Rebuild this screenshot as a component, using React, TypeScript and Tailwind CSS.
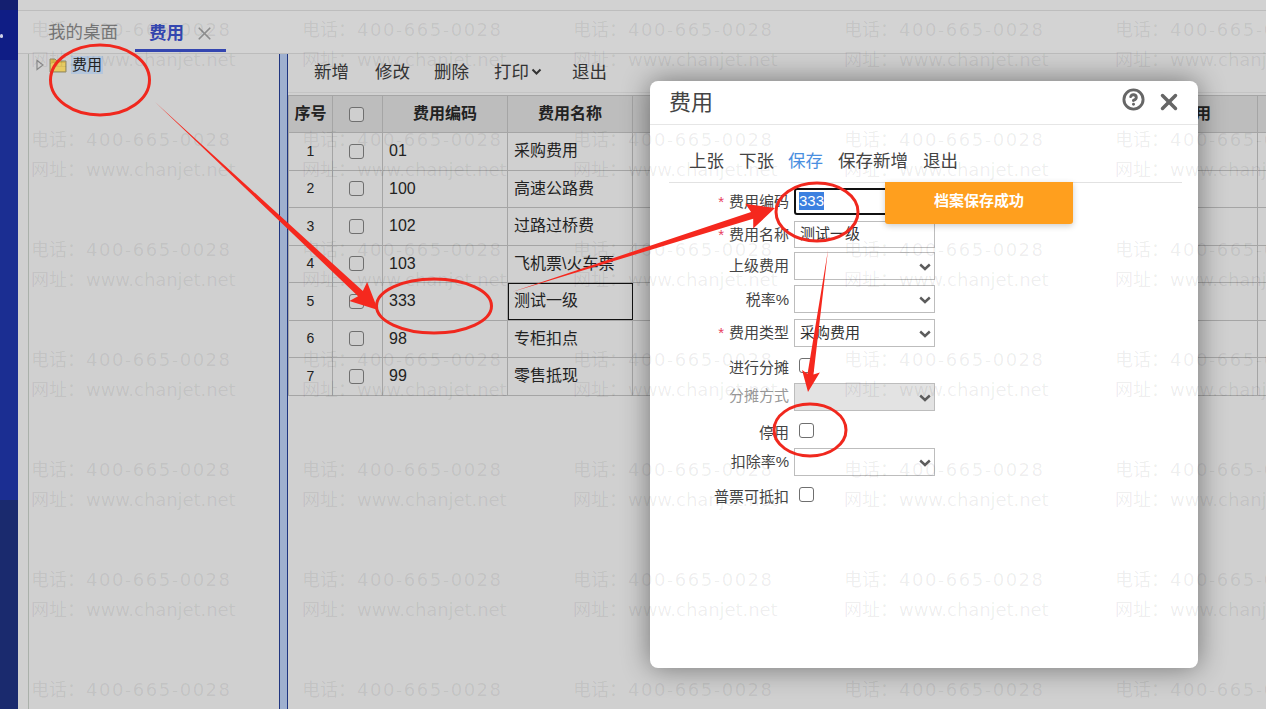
import React from "react";
import { CircleHelp, X } from "lucide-react";

const FONT = '"Liberation Sans","Noto Sans CJK SC",sans-serif';

const rows = [
  ["1", "01", "采购费用"],
  ["2", "100", "高速公路费"],
  ["3", "102", "过路过桥费"],
  ["4", "103", "飞机票\\火车票"],
  ["5", "333", "测试一级"],
  ["6", "98", "专柜扣点"],
  ["7", "99", "零售抵现"],
];

function Check({ dim }: { dim?: boolean }) {
  return (
    <input
      type="checkbox"
      readOnly
      className={
        "block appearance-none w-[15px] h-[15px] rounded-[3px] border border-[#6f6f6f] " +
        (dim ? "bg-[#cfcfcf]" : "bg-white")
      }
    />
  );
}

function Arrow({ x1, y1, x2, y2, w = 7, head = 13, len = 24 }: { x1: number; y1: number; x2: number; y2: number; w?: number; head?: number; len?: number }) {
  const dx = x2 - x1;
  const dy = y2 - y1;
  const d = Math.hypot(dx, dy);
  const ux = dx / d;
  const uy = dy / d;
  const nx = -uy;
  const ny = ux;
  const bx = x2 - ux * len;
  const by = y2 - uy * len;
  const pts = [
    [x1, y1],
    [bx + (nx * w) / 2, by + (ny * w) / 2],
    [bx + nx * head - ux * 3, by + ny * head - uy * 3],
    [x2, y2],
    [bx - nx * head - ux * 3, by - ny * head - uy * 3],
    [bx - (nx * w) / 2, by - (ny * w) / 2],
  ]
    .map((p) => p.join(","))
    .join(" ");
  return <polygon points={pts} fill="#f5281e" />;
}

function Row({ label, star, mt, grey, lab = "", children }: { label: string; star?: boolean; mt: string; grey?: boolean; lab?: string; children: React.ReactNode }) {
  return (
    <div className={"flex items-center h-[30px] " + mt}>
      <div className={"w-[139px] text-right text-[15px] leading-none " + lab + " " + (grey ? "text-[#999]" : "text-[#444]")}>
        {star && <span className="text-[#e8405f] mr-[5px]">*</span>}
        {label}
      </div>
      <div className="ml-[5px] flex items-center">{children}</div>
    </div>
  );
}

function Box({ children }: { children: React.ReactNode }) {
  return <div className="ml-[5px] -mt-[2px]">{children}</div>;
}

function Sel({ value, disabled }: { value?: string; disabled?: boolean }) {
  return (
    <div className="relative w-[141px] h-[28px]">
      <select
        disabled={disabled}
        defaultValue={value ?? ""}
        className={
          "block appearance-none w-full h-full border border-[#bdbdbd] text-[15px] pl-[5px] text-[#333] " +
          (disabled ? "bg-[#e3e3e3]" : "bg-white")
        }
        style={{ fontFamily: FONT }}
      >
        <option value="">{""}</option>
        {value && <option value={value}>{value}</option>}
      </select>
      <svg width="12" height="8" viewBox="0 0 12 8" className="absolute right-[4px] top-[11px] pointer-events-none">
        <path d="M1.2 1.5 L6 6 L10.8 1.5" fill="none" stroke="#5c5c5c" strokeWidth="2.4" />
      </svg>
    </div>
  );
}

export default function App() {
  const marks = Array.from({ length: 35 }, (_, i) => i);
  return (
    <div className="relative flex w-[1266px] h-[709px] overflow-hidden bg-[#d0d0d0] text-[#333]" style={{ fontFamily: FONT }}>
      {/* left rail */}
      <div className="w-[18px] flex flex-col shrink-0">
        <div className="h-[10px] bg-[#141f70]" />
        <div className="h-[50px] bg-[#0f1d85] relative">
          <div className="absolute left-0 top-[24px] w-[3px] h-[4px] rounded-full bg-white/80" />
        </div>
        <div className="h-[440px] bg-[#1b2e92]" />
        <div className="flex-1 bg-[#1a2a6e]" />
      </div>

      {/* main */}
      <div className="flex-1 flex flex-col min-w-0">
        <div className="h-[11px] border-b border-[#bdbdbd] bg-[#d2d2d2]" />
        <div className="h-[43px] border-b border-[#bcbcbc] bg-[#d3d3d3] flex items-end pl-[30px]">
          <div className="h-full flex items-center text-[17.5px] text-[#777] w-[87px]">我的桌面</div>
          <div className="flex items-center w-[91px] h-[37px] border-b-[3px] border-[#3446b0] pl-[14px] pt-[2px] mb-[1px]">
            <span className="text-[17.5px] font-bold text-[#3446b0]">费用</span>
            <X size={21} className="ml-[10px] text-[#8d8d8d]" strokeWidth={2} />
          </div>
        </div>

        <div className="flex-1 flex min-h-0">
          {/* tree */}
          <div className="ml-[10px] w-[252px] shrink-0 border-l border-[#aab0aa] border-r border-r-[#1f3580] pl-[6px] pt-[2px]">
            <div className="flex items-center h-[18px]">
              <svg width="10" height="12" viewBox="0 0 10 12" className="mr-[4px]">
                <path d="M2 1.5 L8 6 L2 10.5 Z" fill="none" stroke="#8a8a8a" strokeWidth="1.2" />
              </svg>
              <svg width="18" height="16" viewBox="0 0 18 16" className="mr-[4px]">
                <path d="M1 2h5l2 2h9v11H1z" fill="#d9b64a" stroke="#8f8a6a" />
                <path d="M2 6h14v8H2z" fill="#e8cb62" />
              </svg>
              <span className="bg-[#b4c6dc] text-[15px] leading-[18px] text-[#222] px-[1px]">费用</span>
            </div>
          </div>
          <div className="w-[7px] shrink-0 bg-[#9fb0cf] border-r border-[#1f3580] box-content" />

          {/* list */}
          <div className="flex-1 min-w-0 flex flex-col">
            <div className="h-[39px] border-b border-[#c4c4c4] flex items-center pl-[26px] pb-[2px] text-[17.5px] text-[#333]">
              <span className="w-[61px]">新增</span>
              <span className="w-[59px]">修改</span>
              <span className="w-[60px]">删除</span>
              <span className="w-[78px] flex items-center">
                打印
                <svg width="11" height="8" viewBox="0 0 11 8" className="ml-[2px]">
                  <path d="M1.5 1.5 L5.5 5.5 L9.5 1.5" fill="none" stroke="#333" strokeWidth="2" />
                </svg>
              </span>
              <span>退出</span>
            </div>
            <table className="mt-[2px] w-[1094px] table-fixed border-collapse text-[16px] text-[#222]">
              <colgroup>
                <col className="w-[44px]" />
                <col className="w-[50px]" />
                <col className="w-[125px]" />
                <col className="w-[125px]" />
                <col className="w-[125px]" />
                <col className="w-[125px]" />
                <col className="w-[125px]" />
                <col className="w-[125px]" />
                <col className="w-[125px]" />
                <col className="w-[125px]" />
              </colgroup>
              <thead>
                <tr className="h-[37px] bg-[#bdbdbd]">
                  <th className="border border-[#a5a5a5] font-bold text-[16px]">序号</th>
                  <th className="border border-[#a5a5a5]">
                    <div className="flex justify-center pr-[3px]"><Check dim /></div>
                  </th>
                  <th className="border border-[#a5a5a5] font-bold">费用编码</th>
                  <th className="border border-[#a5a5a5] font-bold">费用名称</th>
                  <th className="border border-[#a5a5a5]" />
                  <th className="border border-[#a5a5a5]" />
                  <th className="border border-[#a5a5a5]" />
                  <th className="border border-[#a5a5a5]" />
                  <th className="border border-[#a5a5a5] font-bold">停用</th>
                  <th className="border border-[#a5a5a5]" />
                </tr>
              </thead>
              <tbody>
                {rows.map((r) => (
                  <tr key={r[0]} className="h-[37.5px]">
                    <td className="border border-[#a5a5a5] text-center text-[14px] align-middle">{r[0]}</td>
                    <td className="border border-[#a5a5a5]">
                      <div className="flex justify-center pr-[3px]"><Check dim /></div>
                    </td>
                    <td className="border border-[#a5a5a5] pl-[6px]">{r[1]}</td>
                    <td className={"pl-[6px] border border-[#a5a5a5] " + (r[0] === "5" ? "outline outline-1 -outline-offset-1 outline-[#111]" : "")}>{r[2]}</td>
                    <td className="border border-[#a5a5a5]" />
                    <td className="border border-[#a5a5a5]" />
                    <td className="border border-[#a5a5a5]" />
                    <td className="border border-[#a5a5a5]" />
                    <td className="border border-[#a5a5a5]" />
                    <td className="border border-[#a5a5a5]" />
                  </tr>
                ))}
              </tbody>
            </table>
          </div>
        </div>
      </div>

      {/* dialog */}
      <div className="absolute left-[650px] top-[81px] w-[548px] h-[587px] bg-white rounded-[8px] shadow-[0_0_28px_rgba(0,0,0,0.45)] flex flex-col">
        <div className="h-[44px] shrink-0 border-b border-[#e6e6e6] flex items-center pl-[19px] pr-[16px]">
          <span className="text-[22px] text-[#444] flex-1">费用</span>
          <CircleHelp size={23} strokeWidth={3} className="text-[#666] mr-[11px] -mt-[6px]" />
          <X size={26} strokeWidth={3.2} className="text-[#666] -mt-[2px]" />
        </div>
        <div className="mx-[19px] mr-[16px] h-[58px] shrink-0 border-b border-[#e2e2e2] flex items-end pb-[8px] pl-[20px] text-[17.5px] text-[#444]">
          <span className="w-[50px]">上张</span>
          <span className="w-[49px]">下张</span>
          <span className="w-[50px] text-[#4a8fe0]">保存</span>
          <span className="w-[85px]">保存新增</span>
          <span>退出</span>
        </div>
        <div className="flex flex-col mt-[3px]">
          <Row label="费用编码" star mt="">
            <div className="w-[141px] h-[27px] border-2 border-[#111] rounded-[3px] flex items-center pl-[3px] text-[15px]">
              <span className="bg-[#3b80e0] text-white leading-[18px]">333</span>
            </div>
          </Row>
          <Row label="费用名称" star mt="mt-[3px]">
            <div className="w-[141px] h-[27px] border border-[#bdbdbd] flex items-center pl-[5px] text-[15px] text-[#333]">测试一级</div>
          </Row>
          <Row label="上级费用" mt="mt-[2px]" lab="pb-[2px]"><Sel /></Row>
          <Row label="税率%" mt="mt-[3px]"><Sel /></Row>
          <Row label="费用类型" star mt="mt-[4px]" lab="pb-[2px]"><Sel value="采购费用" /></Row>
          <Row label="进行分摊" mt="mt-[3px]" lab="pt-[2px]"><Box><Check /></Box></Row>
          <Row label="分摊方式" grey mt="mt-[1px]" lab="pb-[4px]"><Sel disabled /></Row>
          <Row label="停用" mt="mt-[4px]" lab="pt-[2px]"><Box><Check /></Box></Row>
          <Row label="扣除率%" mt="mt-[1px]" lab="pb-[2px]"><Sel /></Row>
          <Row label="普票可抵扣" mt="mt-[3px]" lab="pt-[3px]"><Box><Check /></Box></Row>
        </div>
        <div className="absolute left-[235px] top-[101px] w-[188px] h-[42px] bg-[#ff9f1e] rounded-b-[3px] shadow-[0_2px_6px_rgba(0,0,0,0.2)] flex items-center justify-center text-white text-[15px] font-bold pb-[4px]">
          档案保存成功
        </div>
      </div>

      {/* watermark */}
      <div className="absolute left-[31px] top-[15px] w-[1400px] flex flex-wrap pointer-events-none select-none">
        {marks.map((i) => (
          <div
            key={i}
            className="w-[271px] h-[110px] text-[18px] leading-[30px] text-black/[0.07] whitespace-nowrap"
            style={{ fontFamily: '"DejaVu Sans","Noto Sans CJK SC",sans-serif' }}
          >
            <div className="flex">
              <span className="w-[55px]">电话：</span>
              <span className="tracking-[1.5px]">400-665-0028</span>
            </div>
            <div className="flex">
              <span className="w-[55px]">网址：</span>
              <span className="tracking-[-0.05px]">www.chanjet.net</span>
            </div>
          </div>
        ))}
      </div>

      {/* annotations */}
      <svg className="absolute left-0 top-0 pointer-events-none" width="1266" height="709" viewBox="0 0 1266 709">
        <g fill="none" stroke="#f0281e" strokeWidth="3">
          <ellipse cx="100" cy="80" rx="49.5" ry="35" />
          <ellipse cx="434" cy="306" rx="57.5" ry="27" />
          <ellipse cx="817" cy="212" rx="41" ry="29" />
          <ellipse cx="810" cy="430" rx="36" ry="26" />
        </g>
        <Arrow x1={155} y1={102} x2={378} y2={310} />
        <Arrow x1={512} y1={292} x2={775} y2={208} />
        <Arrow x1={828} y1={250} x2={808} y2={392} w={6} head={9} len={18} />
      </svg>
    </div>
  );
}
